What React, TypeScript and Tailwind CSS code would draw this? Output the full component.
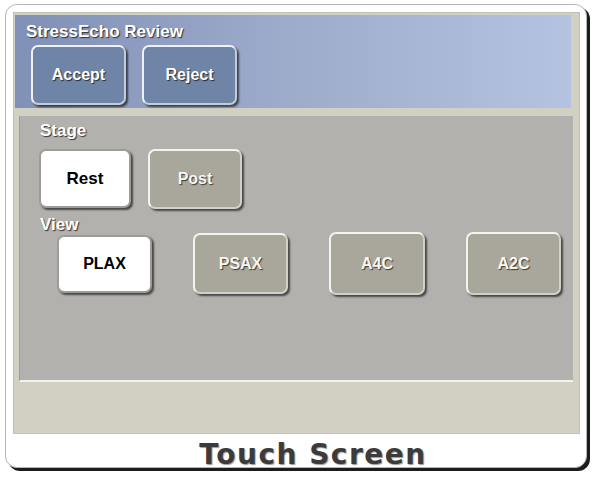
const sans = "font-['Liberation_Sans',Arial,sans-serif]";

type BtnProps = {
  label: string;
  tone: "blue" | "khaki" | "white";
  className?: string;
};

// Bevelled touch key: light rim on the top/left, dark drop shadow bottom/right.
function Key({ label, tone, className = "" }: BtnProps) {
  const face =
    tone === "blue"
      ? "bg-[#6f85a7] border-t-[#eef1f6] border-l-[#eef1f6] border-r-[#c6ccd6] border-b-[#c6ccd6] text-white [text-shadow:1px_1px_1px_#2a2a2a]"
      : tone === "khaki"
        ? "bg-[#a9a79b] border-t-[#f4f4ef] border-l-[#f4f4ef] border-r-[#d2d1c8] border-b-[#d2d1c8] text-[#f6f6f2] [text-shadow:1px_1px_1px_#3a3a3a]"
        : "bg-white border-[#9d9c96] text-black";
  return (
    <div
      className={`flex items-center justify-center rounded-[7px] border-2 ${face} shadow-[2px_2px_2px_rgba(0,0,0,0.6)] ${sans} text-[16px] font-bold ${className}`}
    >
      {label}
    </div>
  );
}

function Label({ children, className = "" }: { children: string; className?: string }) {
  return (
    <div
      className={`${sans} text-[17px] font-bold leading-none text-white [text-shadow:1px_1px_1px_#333] ${className}`}
    >
      {children}
    </div>
  );
}

export default function App() {
  return (
    <div className="w-[595px] h-[479px] bg-white overflow-hidden">
      <div className="ml-[5px] mt-[4px] w-[582px] h-[464px] rounded-[12px] border border-[#b5b5b5] bg-white shadow-[3px_3px_0_#1c1c1c] flex flex-col">
        {/* screen surface */}
        <div className="shrink-0 ml-[7px] mt-[7px] w-[567px] h-[422px] border border-[#c2c1b8] bg-[#d2d0c3] flex flex-col">
          {/* review header */}
          <div className="ml-[1px] mt-[2px] w-[556px] h-[93px] bg-gradient-to-r from-[#8090b6] via-[#9eaccc] to-[#b4c3e1] pl-[11px] pt-[8px]">
            <Label className="text-[17px]">StressEcho Review</Label>
            <div className="flex gap-[16px] mt-[5px] ml-[5px]">
              <Key label="Accept" tone="blue" className="w-[95px] h-[60px]" />
              <Key label="Reject" tone="blue" className="w-[95px] h-[60px]" />
            </div>
          </div>

          {/* stage / view panel */}
          <div className="ml-[5px] mt-[8px] w-[554px] h-[266px] bg-[#b3b1ad] border-b-2 border-b-[#f2f2ee] border-l border-l-[#9e9c98] pl-[20px] pt-[6px]">
            <Label>Stage</Label>
            <div className="flex gap-[17px] mt-[10px] -ml-[1px]">
              <Key label="Rest" tone="white" className="w-[92px] h-[59px] text-[17px]" />
              <Key label="Post" tone="khaki" className="w-[94px] h-[60px]" />
            </div>
            <Label className="mt-[7px]">View</Label>
            <div className="flex gap-[41px] mt-[2px] ml-[17px]">
              <Key label="PLAX" tone="white" className="w-[95px] h-[58px]" />
              <Key label="PSAX" tone="khaki" className="w-[95px] h-[61px] -mt-[2px]" />
              <Key label="A4C" tone="khaki" className="w-[96px] h-[63px] -mt-[3px]" />
              <Key label="A2C" tone="khaki" className="w-[95px] h-[63px] -mt-[3px]" />
            </div>
          </div>
        </div>

        {/* caption */}
        <div className="flex-1 min-h-0 flex items-start justify-center pl-[34px] pt-[9px]">
          <span className="font-['DejaVu_Sans',sans-serif] font-bold text-[28px] tracking-[1.5px] leading-[24px] text-[#3b3b3b] [text-shadow:1px_1px_1px_#9a9a9a]">
            Touch Screen
          </span>
        </div>
      </div>
    </div>
  );
}
